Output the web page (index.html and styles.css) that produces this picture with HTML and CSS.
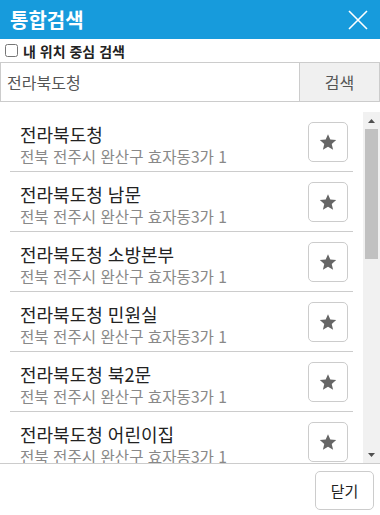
FILE: index.html
```html
<!DOCTYPE html>
<html lang="ko">
<head>
<meta charset="utf-8">
<link rel="stylesheet" href="styles.css">
</head>
<body>
<div class="dialog">
  <div class="header">
    <span class="title">통합검색</span>
    <svg class="close" width="20" height="20" viewBox="0 0 20 20"><path d="M1 1 L19 19 M19 1 L1 19" stroke="#fff" stroke-width="1.6" fill="none"/></svg>
  </div>
  <label class="opt-row"><input type="checkbox" class="chk"><span>내 위치 중심 검색</span></label>
  <div class="search-row">
    <div class="search-input">전라북도청</div>
    <div class="search-btn">검색</div>
  </div>
  <div class="list-wrap">
    <div class="list">
      <div class="item"><div class="info"><div class="name">전라북도청</div><div class="addr">전북 전주시 완산구 효자동3가 1</div></div><div class="star"><svg width="18" height="18" viewBox="0 0 24 24"><path d="M12 1.5l3.1 7.2 7.8.7-5.9 5.2 1.8 7.7L12 18.2l-6.8 4.1 1.8-7.7-5.9-5.2 7.8-.7z" fill="#666"/></svg></div></div>
      <div class="item"><div class="info"><div class="name">전라북도청 남문</div><div class="addr">전북 전주시 완산구 효자동3가 1</div></div><div class="star"><svg width="18" height="18" viewBox="0 0 24 24"><path d="M12 1.5l3.1 7.2 7.8.7-5.9 5.2 1.8 7.7L12 18.2l-6.8 4.1 1.8-7.7-5.9-5.2 7.8-.7z" fill="#666"/></svg></div></div>
      <div class="item"><div class="info"><div class="name">전라북도청 소방본부</div><div class="addr">전북 전주시 완산구 효자동3가 1</div></div><div class="star"><svg width="18" height="18" viewBox="0 0 24 24"><path d="M12 1.5l3.1 7.2 7.8.7-5.9 5.2 1.8 7.7L12 18.2l-6.8 4.1 1.8-7.7-5.9-5.2 7.8-.7z" fill="#666"/></svg></div></div>
      <div class="item"><div class="info"><div class="name">전라북도청 민원실</div><div class="addr">전북 전주시 완산구 효자동3가 1</div></div><div class="star"><svg width="18" height="18" viewBox="0 0 24 24"><path d="M12 1.5l3.1 7.2 7.8.7-5.9 5.2 1.8 7.7L12 18.2l-6.8 4.1 1.8-7.7-5.9-5.2 7.8-.7z" fill="#666"/></svg></div></div>
      <div class="item"><div class="info"><div class="name">전라북도청 북2문</div><div class="addr">전북 전주시 완산구 효자동3가 1</div></div><div class="star"><svg width="18" height="18" viewBox="0 0 24 24"><path d="M12 1.5l3.1 7.2 7.8.7-5.9 5.2 1.8 7.7L12 18.2l-6.8 4.1 1.8-7.7-5.9-5.2 7.8-.7z" fill="#666"/></svg></div></div>
      <div class="item"><div class="info"><div class="name">전라북도청 어린이집</div><div class="addr">전북 전주시 완산구 효자동3가 1</div></div><div class="star"><svg width="18" height="18" viewBox="0 0 24 24"><path d="M12 1.5l3.1 7.2 7.8.7-5.9 5.2 1.8 7.7L12 18.2l-6.8 4.1 1.8-7.7-5.9-5.2 7.8-.7z" fill="#666"/></svg></div></div>
      <div class="item"><div class="info"><div class="name">전라북도청 서문</div><div class="addr">전북 전주시 완산구 효자동3가 1</div></div><div class="star"><svg width="18" height="18" viewBox="0 0 24 24"><path d="M12 1.5l3.1 7.2 7.8.7-5.9 5.2 1.8 7.7L12 18.2l-6.8 4.1 1.8-7.7-5.9-5.2 7.8-.7z" fill="#666"/></svg></div></div>
    </div>
    <div class="scrollbar">
      <div class="sb-btn"><svg width="7" height="4" viewBox="0 0 7 4"><path d="M0 4 L3.5 0 L7 4 Z" fill="#505050"/></svg></div>
      <div class="sb-track"><div class="sb-thumb"></div></div>
      <div class="sb-btn"><svg width="7" height="4" viewBox="0 0 7 4"><path d="M0 0 L3.5 4 L7 0 Z" fill="#505050"/></svg></div>
    </div>
  </div>
  <div class="footer">
    <div class="close-btn">닫기</div>
  </div>
</div>
</body>
</html>
```

FILE: styles.css
```css
html, body {
  margin: 0;
  padding: 0;
  background: #fff;
}
body {
  font-family: "Noto Sans CJK KR", "Noto Sans", sans-serif;
  color: #222;
}
.dialog {
  width: 380px;
  height: 515px;
  display: flex;
  flex-direction: column;
  overflow: hidden;
}
.header {
  height: 39px;
  background: #179bdc;
  display: flex;
  align-items: center;
  justify-content: space-between;
  padding: 0 12px 0 10px;
  flex: none;
}
.title {
  color: #fff;
  font-size: 20px;
  font-weight: bold;
  line-height: 1;
}
.close {
  display: block;
}
.opt-row {
  height: 23px;
  display: flex;
  align-items: center;
  padding-left: 3px;
  font-size: 14px;
  font-weight: bold;
  color: #222;
  flex: none;
}
.chk {
  width: 13px;
  height: 13px;
  margin: 0 5px 0 2px;
}
.search-row {
  display: flex;
  height: 40px;
  flex: none;
}
.search-input {
  flex: 1;
  border: 1px solid #ccc;
  border-right: none;
  display: flex;
  align-items: center;
  padding-left: 6px;
  font-size: 16px;
  color: #555;
}
.search-btn {
  width: 79px;
  border: 1px solid #ccc;
  background: #f0f0f0;
  display: flex;
  align-items: center;
  justify-content: center;
  font-size: 16px;
  color: #555;
}
.list-wrap {
  margin-top: 10px;
  height: 351px;
  display: flex;
  flex: none;
}
.list {
  flex: 1;
  overflow: hidden;
  padding: 0 10px;
}
.scrollbar {
  width: 17px;
  background: #f1f1f1;
  display: flex;
  flex-direction: column;
}
.sb-btn {
  height: 17px;
  display: flex;
  align-items: center;
  justify-content: center;
  flex: none;
}
.sb-btn svg {
  display: block;
}
.sb-track {
  flex: 1;
  padding: 0 2px;
}
.sb-thumb {
  height: 130px;
  background: #c1c1c1;
}
.item {
  height: 59px;
  border-bottom: 1px solid #ccc;
  display: flex;
  align-items: center;
  justify-content: space-between;
  padding: 0 5px 0 10px;
}
.info {
  padding-top: 5px;
}
.name {
  font-size: 18px;
  color: #222;
  line-height: 24px;
}
.addr {
  font-size: 15.6px;
  color: #888;
  line-height: 20px;
}
.star {
  width: 38px;
  height: 38px;
  border: 1px solid #ccc;
  border-radius: 5px;
  display: flex;
  align-items: center;
  justify-content: center;
}
.footer {
  border-top: 1px solid #ccc;
  flex: 1;
  display: flex;
  justify-content: flex-end;
  align-items: flex-start;
  padding: 7px 6px 0 0;
}
.close-btn {
  width: 57px;
  height: 37px;
  border: 1px solid #ccc;
  border-radius: 5px;
  display: flex;
  align-items: center;
  justify-content: center;
  font-size: 15px;
  color: #222;
}
```
